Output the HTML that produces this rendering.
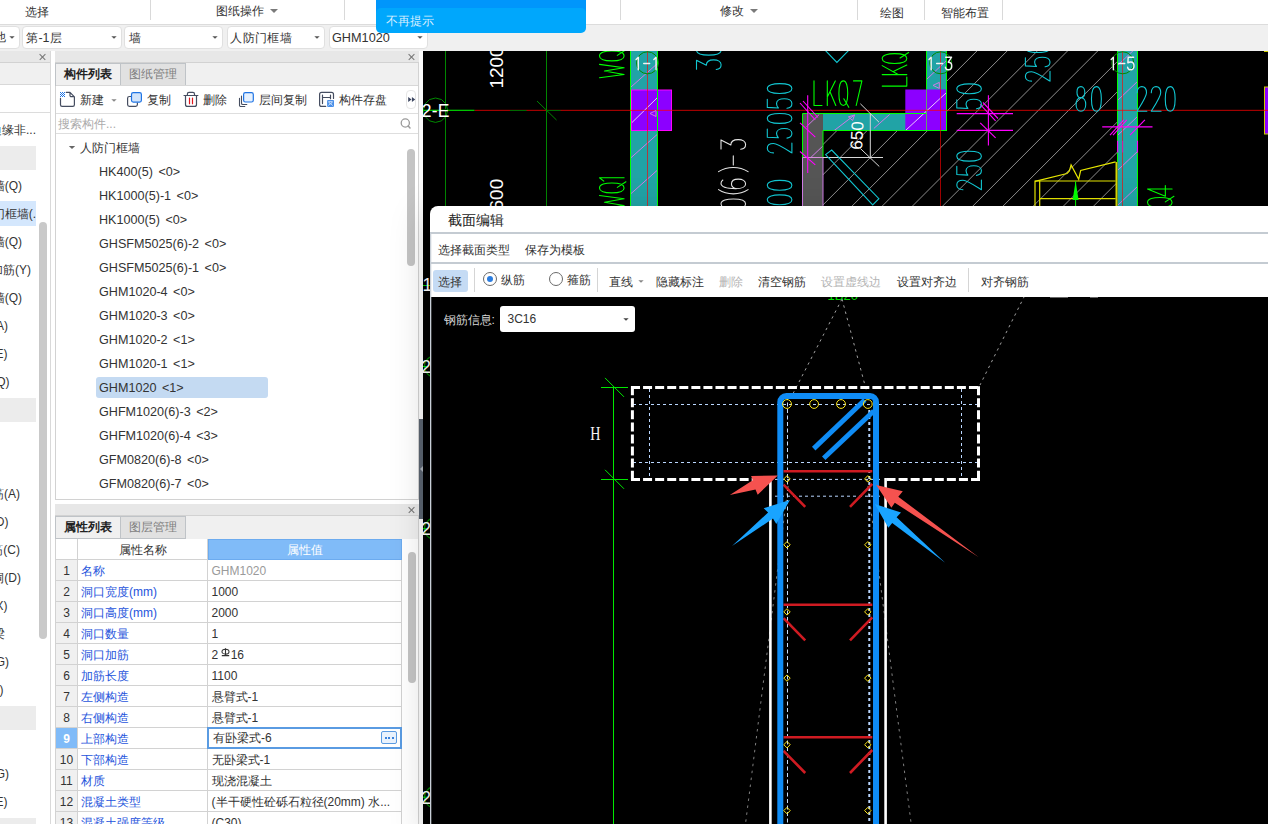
<!DOCTYPE html>
<html><head><meta charset="utf-8"><title>ui</title>
<style>
*{box-sizing:border-box;margin:0;padding:0}
html,body{width:1268px;height:824px;overflow:hidden;background:#fff}
body{position:relative;font-family:"Liberation Sans",sans-serif;font-size:12px;color:#333;line-height:1}
.abs{position:absolute}
.c{display:inline-block;width:1em;text-align:center}
.t{position:absolute;white-space:nowrap;line-height:14px;height:14px}
svg{position:absolute;left:0;top:0}
svg.ico{position:relative;left:auto;display:inline-block;vertical-align:baseline}
/* ribbon */
#ribbon{left:0;top:0;width:1268px;height:24px;background:#fff}
.rsep{position:absolute;top:0;width:1px;height:20px;background:#d9d9d9}
.rtri{position:absolute;width:0;height:0;border-left:4px solid transparent;border-right:4px solid transparent;border-top:4px solid #7a7a7a}
#tbar{left:0;top:24px;width:1268px;height:27px;background:#f0f0f0;border-top:1px solid #dcdcdc}
.dd{position:absolute;top:25.8px;height:22.8px;background:#fff;border:1px solid #e0e0e0;border-radius:4px;font-size:12.4px}
.dd .t{top:4px}
.ddtri{position:absolute;width:0;height:0;border-left:3px solid transparent;border-right:3px solid transparent;border-top:3.5px solid #555;transform:scale(0.9)}
/* panels */
.phead{position:absolute;background:#e7e7e7;border-bottom:1px solid #d2d2d2}
.tabrow{position:absolute;background:#f0f0f0}
.tab{position:absolute;height:23px;border:1px solid #bfc3c7;line-height:21px;text-align:center;font-size:12px}
.tab.on{background:#f0f0f0;font-weight:bold;color:#222}
.tab.off{background:#e1e1e1;color:#7e7e7e}
.closex{position:absolute;width:9px;height:9px}
.closex:before,.closex:after{content:"";position:absolute;left:4px;top:0.4px;width:1px;height:8.2px;background:#747474}
.closex:before{transform:rotate(45deg)}
.closex:after{transform:rotate(-45deg)}
.li{position:absolute;left:99px;height:16px;line-height:16px;font-size:12.6px;word-spacing:2px;color:#333;white-space:nowrap}
.lrow{position:absolute;left:0;height:16px;line-height:16px;font-size:12px;color:#333;white-space:nowrap;text-align:right}
.pr{position:absolute;left:55px;width:347px;height:21px}
.pr .i{position:absolute;left:0;top:0;width:23px;height:21px;background:#f0f0f0;border-right:1px solid #d2d2d2;border-bottom:1px solid #d2d2d2;text-align:center;line-height:22.5px;color:#333;border-left:1px solid #d2d2d2}
.pr .n{position:absolute;left:23px;top:0;width:130px;height:21px;border-right:1px solid #d2d2d2;border-bottom:1px solid #d2d2d2;line-height:22.5px;padding-left:3px;color:#1f55dc;white-space:nowrap;overflow:hidden}
.pr .v{position:absolute;left:153px;top:0;width:194px;height:21px;border-right:1px solid #d2d2d2;border-bottom:1px solid #d2d2d2;line-height:22.5px;padding-left:3.5px;color:#333;white-space:nowrap;overflow:hidden}
.sb{position:absolute;background:#c4c4c4;border-radius:4px}
/* dialog */
#dlg{left:430px;top:206px;width:838px;height:91px;background:#fff;border-top-left-radius:8px}
.dsep{position:absolute;left:0;width:838px;height:1.8px;background:#c4cbd2}
.vsep{position:absolute;width:1px;background:#d5d5d5}
.radio{position:absolute;width:14px;height:14px;border:1px solid #6a6a6a;border-radius:50%;background:#fff}
.radio.on:after{content:"";position:absolute;left:3px;top:3px;width:6px;height:6px;border-radius:50%;background:#2b7de0}
</style></head>
<body>
<div id="ribbon" class="abs">
<div class="rsep" style="left:150px"></div>
<div class="rsep" style="left:344px"></div>
<div class="rsep" style="left:620px"></div>
<div class="rsep" style="left:857px"></div>
<div class="rsep" style="left:924px"></div>
<div class="rsep" style="left:1002px"></div>
<div class="t" style="left:25px;top:5px;"><span class="c">选</span><span class="c">择</span></div>
<div class="t" style="left:216px;top:3.5px;"><span class="c">图</span><span class="c">纸</span><span class="c">操</span><span class="c">作</span></div>
<div class="rtri" style="left:269.5px;top:9px"></div>
<div class="t" style="left:720px;top:3.5px;"><span class="c">修</span><span class="c">改</span></div>
<div class="rtri" style="left:749.5px;top:9px"></div>
<div class="t" style="left:880px;top:5.5px;"><span class="c">绘</span><span class="c">图</span></div>
<div class="t" style="left:941px;top:5.5px;"><span class="c">智</span><span class="c">能</span><span class="c">布</span><span class="c">置</span></div>
</div>
<div id="tbar" class="abs"></div>
<div class="dd" style="left:-20px;width:39.5px">
</div>
<div class="ddtri" style="left:8.7px;top:35.5px"></div>
<div class="dd" style="left:22px;width:99.5px">
<div class="t" style="left:3px;"><span class="c">第</span>-1<span class="c">层</span></div>
</div>
<div class="ddtri" style="left:110.5px;top:35.5px"></div>
<div class="dd" style="left:124px;width:99px">
<div class="t" style="left:3.5px;"><span class="c">墙</span></div>
</div>
<div class="ddtri" style="left:212.2px;top:35.5px"></div>
<div class="dd" style="left:226.6px;width:98.6px">
<div class="t" style="left:2.4px;"><span class="c">人</span><span class="c">防</span><span class="c">门</span><span class="c">框</span><span class="c">墙</span></div>
</div>
<div class="ddtri" style="left:314px;top:35.5px"></div>
<div class="dd" style="left:328.6px;width:99px">
<div class="t" style="left:2.4px;font-size:12.7px">GHM1020</div>
</div>
<div class="ddtri" style="left:416.6px;top:35.5px"></div>
<div class="t" style="left:-6.5px;top:30px;"><span class="c">他</span></div>
<div class="abs" style="left:0;top:51px;width:51px;height:773px;background:#fff;border-right:1px solid #d9d9d9"></div>
<div class="phead" style="left:0;top:51px;width:50px;height:12px"></div>
<div class="closex" style="left:38.3px;top:53px"></div>
<div class="abs" style="left:0;top:63px;width:50px;height:22px;background:#f0f0f0;border-bottom:1px solid #d8d8d8"></div>
<div class="abs" style="left:0;top:112px;width:50px;height:1px;background:#dcdcdc"></div>
<div class="abs" style="left:0;top:145.7px;width:35.8px;height:24.6px;background:#ececec"></div>
<div class="abs" style="left:0;top:397.7px;width:35.8px;height:24.6px;background:#ececec"></div>
<div class="abs" style="left:0;top:705.7px;width:35.8px;height:24.6px;background:#ececec"></div>
<div class="abs" style="left:0;top:817.7px;width:35.8px;height:24.6px;background:#ececec"></div>
<div class="abs" style="left:0;top:201.2px;width:35.8px;height:24.7px;background:#d4e7fd"></div>
<div class="lrow" style="top:122px;width:36px;left:0"><span style="position:absolute;right:0;top:0"><span class="c">边</span><span class="c">缘</span><span class="c">非</span>...</span></div>
<div class="lrow" style="top:178px;width:22px;left:0"><span style="position:absolute;right:0;top:0"><span class="c">墙</span>(Q)</span></div>
<div class="lrow" style="top:206px;width:36px;left:0"><span style="position:absolute;right:0;top:0"><span class="c">门</span><span class="c">框</span><span class="c">墙</span>(.</span></div>
<div class="lrow" style="top:234px;width:22px;left:0"><span style="position:absolute;right:0;top:0"><span class="c">墙</span>(Q)</span></div>
<div class="lrow" style="top:262px;width:31px;left:0"><span style="position:absolute;right:0;top:0"><span class="c">加</span><span class="c">筋</span>(Y)</span></div>
<div class="lrow" style="top:290px;width:22px;left:0"><span style="position:absolute;right:0;top:0"><span class="c">墙</span>(Q)</span></div>
<div class="lrow" style="top:318px;width:8px;left:0"><span style="position:absolute;right:0;top:0">A)</span></div>
<div class="lrow" style="top:346px;width:7.5px;left:0"><span style="position:absolute;right:0;top:0">E)</span></div>
<div class="lrow" style="top:374px;width:9.5px;left:0"><span style="position:absolute;right:0;top:0">Q)</span></div>
<div class="lrow" style="top:486px;width:20px;left:0"><span style="position:absolute;right:0;top:0"><span class="c">筋</span>(A)</span></div>
<div class="lrow" style="top:514px;width:8.5px;left:0"><span style="position:absolute;right:0;top:0">D)</span></div>
<div class="lrow" style="top:542px;width:20px;left:0"><span style="position:absolute;right:0;top:0"><span class="c">筋</span>(C)</span></div>
<div class="lrow" style="top:570px;width:21px;left:0"><span style="position:absolute;right:0;top:0"><span class="c">洞</span>(D)</span></div>
<div class="lrow" style="top:598px;width:7.5px;left:0"><span style="position:absolute;right:0;top:0">X)</span></div>
<div class="lrow" style="top:626px;width:5px;left:0"><span style="position:absolute;right:0;top:0"><span class="c">梁</span></span></div>
<div class="lrow" style="top:654px;width:9px;left:0"><span style="position:absolute;right:0;top:0">G)</span></div>
<div class="lrow" style="top:682px;width:3.5px;left:0"><span style="position:absolute;right:0;top:0">)</span></div>
<div class="lrow" style="top:766px;width:9px;left:0"><span style="position:absolute;right:0;top:0">G)</span></div>
<div class="lrow" style="top:794px;width:7.5px;left:0"><span style="position:absolute;right:0;top:0">E)</span></div>
<div class="sb" style="left:39.3px;top:221.8px;width:7.3px;height:416.8px;background:#c9c9c9"></div>
<div class="abs" style="left:55px;top:51px;width:364px;height:449px;background:#fff;border:1px solid #d2d2d2;border-top:none"></div>
<div class="phead" style="left:55px;top:51px;width:364px;height:12px"></div>
<div class="closex" style="left:406.5px;top:53px"></div>
<div class="tabrow" style="left:56px;top:63px;width:362px;height:23px"></div>
<div class="tab on" style="left:55px;top:63px;width:66px"><span class="c">构</span><span class="c">件</span><span class="c">列</span><span class="c">表</span></div>
<div class="tab off" style="left:120px;top:63px;width:66px"><span class="c">图</span><span class="c">纸</span><span class="c">管</span><span class="c">理</span></div>
<div class="abs" style="left:56px;top:85px;width:362px;height:1px;background:#d8d8d8"></div>
<div class="abs" style="left:56px;top:113px;width:362px;height:1px;background:#dedede"></div>
<div class="abs" style="left:56px;top:132.5px;width:362px;height:1px;background:#dedede"></div>
<div class="t" style="left:80px;top:93px;"><span class="c">新</span><span class="c">建</span></div>
<div class="ddtri" style="left:110.7px;top:98.5px;border-top-color:#888"></div>
<div class="t" style="left:146.5px;top:93px;"><span class="c">复</span><span class="c">制</span></div>
<div class="t" style="left:203px;top:93px;"><span class="c">删</span><span class="c">除</span></div>
<div class="t" style="left:258.5px;top:93px;"><span class="c">层</span><span class="c">间</span><span class="c">复</span><span class="c">制</span></div>
<div class="t" style="left:339px;top:93px;"><span class="c">构</span><span class="c">件</span><span class="c">存</span><span class="c">盘</span></div>
<div class="abs" style="left:406.2px;top:89.5px;width:10.3px;height:19.5px;background:#fff;border:1px solid #e6e6e6;border-radius:4px"></div>
<div class="t" style="left:58px;top:116.5px;color:#ababab"><span class="c">搜</span><span class="c">索</span><span class="c">构</span><span class="c">件</span>...</div>
<div class="ddtri" style="left:69px;top:145.8px;border-top-color:#666;transform:scale(1.05)"></div>
<div class="t" style="left:79.5px;top:140.5px;"><span class="c">人</span><span class="c">防</span><span class="c">门</span><span class="c">框</span><span class="c">墙</span></div>
<div class="abs" style="left:96px;top:377px;width:172px;height:21px;background:#c4daf2;border-radius:3px"></div>
<div class="li" style="top:164px">HK400(5) &lt;0&gt;</div>
<div class="li" style="top:188px">HK1000(5)-1 &lt;0&gt;</div>
<div class="li" style="top:212px">HK1000(5) &lt;0&gt;</div>
<div class="li" style="top:236px">GHSFM5025(6)-2 &lt;0&gt;</div>
<div class="li" style="top:260px">GHSFM5025(6)-1 &lt;0&gt;</div>
<div class="li" style="top:284px">GHM1020-4 &lt;0&gt;</div>
<div class="li" style="top:308px">GHM1020-3 &lt;0&gt;</div>
<div class="li" style="top:332px">GHM1020-2 &lt;1&gt;</div>
<div class="li" style="top:356px">GHM1020-1 &lt;1&gt;</div>
<div class="li" style="top:380px">GHM1020 &lt;1&gt;</div>
<div class="li" style="top:404px">GHFM1020(6)-3 &lt;2&gt;</div>
<div class="li" style="top:428px">GHFM1020(6)-4 &lt;3&gt;</div>
<div class="li" style="top:452px">GFM0820(6)-8 &lt;0&gt;</div>
<div class="li" style="top:476px">GFM0820(6)-7 &lt;0&gt;</div>
<div class="sb" style="left:407px;top:148.5px;width:8px;height:117.5px"></div>
<div class="abs" style="left:55px;top:504px;width:364px;height:320px;background:#fff;border:1px solid #d2d2d2;border-top:none;border-bottom:none"></div>
<div class="phead" style="left:55px;top:504px;width:364px;height:12px"></div>
<div class="closex" style="left:406.5px;top:506px"></div>
<div class="tabrow" style="left:56px;top:516px;width:362px;height:23px"></div>
<div class="tab on" style="left:55px;top:516px;width:66px"><span class="c">属</span><span class="c">性</span><span class="c">列</span><span class="c">表</span></div>
<div class="tab off" style="left:120px;top:516px;width:66px"><span class="c">图</span><span class="c">层</span><span class="c">管</span><span class="c">理</span></div>
<div class="pr" style="top:539px"><div class="i" style="background:#fff"></div><div class="n" style="color:#333;text-align:center;padding:0"><span class="c">属</span><span class="c">性</span><span class="c">名</span><span class="c">称</span></div><div class="v" style="background:#80bbf8;color:#fff;text-align:center;padding:0;border-color:#6cabef;box-shadow:inset 1px 1px 0 #6cabef"><span class="c">属</span><span class="c">性</span><span class="c">值</span></div></div>
<div class="pr" style="top:560px"><div class="i" style="">1</div><div class="n"><span class="c">名</span><span class="c">称</span></div><div class="v" style="color:#9a9a9a">GHM1020</div></div>
<div class="pr" style="top:581px"><div class="i" style="">2</div><div class="n"><span class="c">洞</span><span class="c">口</span><span class="c">宽</span><span class="c">度</span>(mm)</div><div class="v" style="">1000</div></div>
<div class="pr" style="top:602px"><div class="i" style="">3</div><div class="n"><span class="c">洞</span><span class="c">口</span><span class="c">高</span><span class="c">度</span>(mm)</div><div class="v" style="">2000</div></div>
<div class="pr" style="top:623px"><div class="i" style="">4</div><div class="n"><span class="c">洞</span><span class="c">口</span><span class="c">数</span><span class="c">量</span></div><div class="v" style="">1</div></div>
<div class="pr" style="top:644px"><div class="i" style="">5</div><div class="n"><span class="c">洞</span><span class="c">口</span><span class="c">加</span><span class="c">筋</span></div><div class="v" style="">2<svg class="ico" width="9" height="9" viewBox="0 0 9 9" style="margin:0 0.5px 0 3px;top:-2.5px"><ellipse cx="4.5" cy="3.7" rx="3.5" ry="2.4" fill="none" stroke="#333" stroke-width="1.1"/><path d="M4.5,0.2 V7.4 M0.8,7.6 H8.2" stroke="#333" stroke-width="1.1" fill="none"/></svg>16</div></div>
<div class="pr" style="top:665px"><div class="i" style="">6</div><div class="n"><span class="c">加</span><span class="c">筋</span><span class="c">长</span><span class="c">度</span></div><div class="v" style="">1100</div></div>
<div class="pr" style="top:686px"><div class="i" style="">7</div><div class="n"><span class="c">左</span><span class="c">侧</span><span class="c">构</span><span class="c">造</span></div><div class="v" style=""><span class="c">悬</span><span class="c">臂</span><span class="c">式</span>-1</div></div>
<div class="pr" style="top:707px"><div class="i" style="">8</div><div class="n"><span class="c">右</span><span class="c">侧</span><span class="c">构</span><span class="c">造</span></div><div class="v" style=""><span class="c">悬</span><span class="c">臂</span><span class="c">式</span>-1</div></div>
<div class="pr" style="top:728px"><div class="i" style="background:#80bbf8;color:#fff;font-weight:bold">9</div><div class="n"><span class="c">上</span><span class="c">部</span><span class="c">构</span><span class="c">造</span></div><div class="v" style=""><span class="c">有</span><span class="c">卧</span><span class="c">梁</span><span class="c">式</span>-6</div></div>
<div class="pr" style="top:749px"><div class="i" style="">10</div><div class="n"><span class="c">下</span><span class="c">部</span><span class="c">构</span><span class="c">造</span></div><div class="v" style=""><span class="c">无</span><span class="c">卧</span><span class="c">梁</span><span class="c">式</span>-1</div></div>
<div class="pr" style="top:770px"><div class="i" style="">11</div><div class="n"><span class="c">材</span><span class="c">质</span></div><div class="v" style=""><span class="c">现</span><span class="c">浇</span><span class="c">混</span><span class="c">凝</span><span class="c">土</span></div></div>
<div class="pr" style="top:791px"><div class="i" style="">12</div><div class="n"><span class="c">混</span><span class="c">凝</span><span class="c">土</span><span class="c">类</span><span class="c">型</span></div><div class="v" style="">(<span class="c">半</span><span class="c">干</span><span class="c">硬</span><span class="c">性</span><span class="c">砼</span><span class="c">砾</span><span class="c">石</span><span class="c">粒</span><span class="c">径</span>(20mm) <span class="c">水</span>...</div></div>
<div class="pr" style="top:812px"><div class="i" style="">13</div><div class="n"><span class="c">混</span><span class="c">凝</span><span class="c">土</span><span class="c">强</span><span class="c">度</span><span class="c">等</span><span class="c">级</span></div><div class="v" style="">(C30)</div></div>
<div class="abs" style="left:207px;top:727px;width:195px;height:22px;border:2px solid #5a9be2;background:#fff"></div>
<div class="t" style="left:213px;top:731px;"><span class="c">有</span><span class="c">卧</span><span class="c">梁</span><span class="c">式</span>-6</div>
<div class="abs" style="left:381px;top:731px;width:16px;height:13px;border:1px solid #5a9be2;border-radius:2px;background:#e9f2fd"></div>
<div class="abs" style="left:384.8px;top:736.7px;width:2px;height:2px;background:#3a82dc"></div>
<div class="abs" style="left:388.3px;top:736.7px;width:2px;height:2px;background:#3a82dc"></div>
<div class="abs" style="left:391.8px;top:736.7px;width:2px;height:2px;background:#3a82dc"></div>
<div class="sb" style="left:407.5px;top:552px;width:8px;height:131px"></div>
<div class="abs" style="left:419px;top:51px;width:4px;height:773px;background:#fafafa"></div>
<div class="abs" style="left:419.3px;top:419px;width:3.7px;height:100px;background:#5b6470"></div>
<div class="abs" style="left:419.6px;top:466px;width:0;height:0;border-top:3.5px solid transparent;border-bottom:3.5px solid transparent;border-right:3px solid #aab0b8"></div>
<svg width="1268" height="824" viewBox="0 0 1268 824" style="z-index:3;pointer-events:none">
<path d="M60.5,98.3 V104.8 a1.6,1.6 0 0 0 1.6,1.6 H72.8 a1.6,1.6 0 0 0 1.6,-1.6 V96.8 L70,92.4 H66.3 M70,92.6 V95.4 a1.2,1.2 0 0 0 1.2,1.2 H74.2" fill="none" stroke="#454d60" stroke-width="1.2" stroke-linecap="round" stroke-linejoin="round"/>
<rect x="60" y="92" width="1" height="1" fill="#1f74e4"/>
<rect x="60" y="94" width="1" height="1" fill="#1f74e4"/>
<rect x="60" y="96" width="1" height="1" fill="#1f74e4"/>
<rect x="61" y="93" width="1" height="1" fill="#1f74e4"/>
<rect x="61" y="95" width="1" height="1" fill="#1f74e4"/>
<rect x="62" y="92" width="1" height="1" fill="#1f74e4"/>
<rect x="62" y="94" width="1" height="1" fill="#1f74e4"/>
<rect x="62" y="96" width="1" height="1" fill="#1f74e4"/>
<rect x="63" y="93" width="1" height="1" fill="#1f74e4"/>
<rect x="63" y="95" width="1" height="1" fill="#1f74e4"/>
<rect x="64" y="92" width="1" height="1" fill="#1f74e4"/>
<rect x="64" y="94" width="1" height="1" fill="#1f74e4"/>
<rect x="64" y="96" width="1" height="1" fill="#1f74e4"/>
<path d="M131,96.5 H129.4 a1.8,1.8 0 0 0 -1.8,1.8 V104.6 a1.8,1.8 0 0 0 1.8,1.8 H135.6 a1.8,1.8 0 0 0 1.8,-1.8 V102.5" fill="none" stroke="#454d60" stroke-width="1.2"/>
<rect x="131.5" y="92.6" width="9.9" height="9.5" rx="1.8" fill="#d2e4fa" stroke="#1f74e4" stroke-width="1.2"/>
<path d="M184,95.5 H197.9 M187.4,95.4 V94 a1.6,1.6 0 0 1 1.6,-1.6 H192.9 a1.6,1.6 0 0 1 1.6,1.6 V95.4 M185.5,95.8 V104.4 a2,2 0 0 0 2,2 H194.5 a2,2 0 0 0 2,-2 V95.8" fill="none" stroke="#454d60" stroke-width="1.2" stroke-linecap="round"/>
<path d="M189.5,98.1 V103.7 M192.5,98.1 V103.7" stroke="#e0161e" stroke-width="1.2" stroke-linecap="round"/>
<path d="M241.5,96.1 V103.2 a1.3,1.3 0 0 0 1.3,1.3 H246.8 M239.5,98.3 V105.2 a1.3,1.3 0 0 0 1.3,1.3 H244.8" fill="none" stroke="#454d60" stroke-width="1.1" stroke-linecap="round"/>
<rect x="243.6" y="92.7" width="9.7" height="9.3" rx="1.8" fill="#e6f1fe" stroke="#1f74e4" stroke-width="1.2"/>
<path d="M325.7,106.4 H321.6 a2,2 0 0 1 -2,-2 V94.4 a2,2 0 0 1 2,-2 H331.5 a2,2 0 0 1 2,2 V98.5 M322.5,95.2 V103.6 M322.5,97.5 H330.5 M330.5,95.2 V98.7" fill="none" stroke="#454d60" stroke-width="1.2" stroke-linecap="round"/>
<rect x="327.1" y="100.1" width="6.9" height="6.8" rx="0.8" fill="#4a8fe8"/><path d="M328.6,101.7 H332.4 L331,103.8 L332.6,105.6 M330,103.8 L328.4,105.6 M328.6,101.7 L330,103.8 H331" stroke="#eaf2fd" stroke-width="0.8" fill="none"/>
<circle cx="405.3" cy="123" r="4.1" fill="none" stroke="#9a9a9a" stroke-width="1.3"/><path d="M408.2,126.1 L410,128" stroke="#9a9a9a" stroke-width="1.5" stroke-linecap="round"/>
<path d="M408.2,97 L411.5,99.5 L408.2,102 Z M411.9,97 L415.2,99.5 L411.9,102 Z" fill="#3c4660"/>
</svg>
<svg width="1268" height="824" viewBox="0 0 1268 824" style="z-index:1" font-family="Liberation Sans, sans-serif">
<defs><clipPath id="cadclip"><rect x="423" y="51" width="845" height="773"/></clipPath><clipPath id="hatchclip"><path d="M823,130.5 H947 V51 H1117 V207 H823 Z"/></clipPath></defs>
<rect x="423" y="51" width="845" height="773" fill="#000"/>
<g clip-path="url(#cadclip)">
<g clip-path="url(#hatchclip)" stroke="#8e8e8e" stroke-width="1">
<line x1="757.5" y1="210" x2="927.5" y2="40"/>
<line x1="787.7" y1="210" x2="957.7" y2="40"/>
<line x1="817.9" y1="210" x2="987.9" y2="40"/>
<line x1="848.1" y1="210" x2="1018.1" y2="40"/>
<line x1="878.3" y1="210" x2="1048.3" y2="40"/>
<line x1="908.5" y1="210" x2="1078.5" y2="40"/>
<line x1="938.7" y1="210" x2="1108.7" y2="40"/>
<line x1="968.9" y1="210" x2="1138.9" y2="40"/>
<line x1="999.1" y1="210" x2="1169.1" y2="40"/>
<line x1="1029.3" y1="210" x2="1199.3" y2="40"/>
<line x1="1059.5" y1="210" x2="1229.5" y2="40"/>
<line x1="1089.7" y1="210" x2="1259.7" y2="40"/>
<line x1="1119.9" y1="210" x2="1289.9" y2="40"/>
<line x1="1150.1" y1="210" x2="1320.1" y2="40"/>
<line x1="1180.3" y1="210" x2="1350.3" y2="40"/>
</g>
<line x1="445.5" y1="51" x2="445.5" y2="210" stroke="#008600"/>
<line x1="546.5" y1="51" x2="546.5" y2="210" stroke="#008600"/>
<rect x="630.5" y="51" width="27" height="160" fill="#21a3a6"/>
<rect x="926.5" y="51" width="20" height="79.5" fill="#21a3a6"/>
<rect x="1117.5" y="51" width="20" height="160" fill="#21a3a6"/>
<rect x="802.5" y="114" width="20.5" height="96" fill="#555"/>
<rect x="823" y="114" width="83" height="16.5" fill="#21a3a6"/>
<g stroke="#cf7be6" stroke-width="1">
<line x1="631" y1="87" x2="658" y2="63"/>
<line x1="631" y1="122.8" x2="658" y2="98.8"/>
<line x1="631" y1="157.7" x2="658" y2="133.7"/>
<line x1="631" y1="193.6" x2="658" y2="169.6"/>
<line x1="631" y1="229" x2="658" y2="205"/>
<line x1="926" y1="80" x2="947" y2="60"/>
<line x1="926" y1="115" x2="947" y2="95"/>
<line x1="1118" y1="65" x2="1138" y2="46"/>
<line x1="1118" y1="100" x2="1138" y2="81"/>
<line x1="1118" y1="135" x2="1138" y2="116"/>
<line x1="1118" y1="170" x2="1138" y2="151"/>
<line x1="1118" y1="205" x2="1138" y2="186"/>
<line x1="1118" y1="240" x2="1138" y2="221"/>
<line x1="810.8" y1="157.5" x2="822.9" y2="146"/><line x1="833.8" y1="130.8" x2="854.5" y2="115"/><line x1="873.9" y1="128.4" x2="889.7" y2="114.4"/><line x1="806.5" y1="126.6" x2="819.3" y2="114.4"/>
</g>
<rect x="631.5" y="90" width="40" height="40.5" fill="#8c00ff" stroke="#ff00ff" stroke-width="1"/>
<rect x="905.3" y="89.5" width="40.9" height="40.5" fill="#8c00ff"/>
<rect x="1264.5" y="87" width="6" height="47" fill="#8c00ff" stroke="#d0d000" stroke-width="1"/>
<line x1="1264" y1="51.5" x2="1268" y2="51.5" stroke="#d0d000"/>
<g stroke="#e9c8ff" stroke-width="1"><line x1="632" y1="122.5" x2="658" y2="97"/><line x1="906" y1="130" x2="946" y2="93"/></g>
<g stroke="#00ff00" stroke-width="1" fill="none">
<line x1="630.5" y1="51" x2="630.5" y2="210"/><line x1="657.5" y1="51" x2="657.5" y2="210"/>
<line x1="926.5" y1="51" x2="926.5" y2="89.5"/><line x1="926.5" y1="89.5" x2="926.5" y2="130" stroke="#5f9f6f"/><line x1="946.5" y1="51" x2="946.5" y2="130.5"/>
<line x1="1117.5" y1="51" x2="1117.5" y2="162"/><line x1="1137.5" y1="51" x2="1137.5" y2="210"/>
<path d="M802.5,158 V113.5 H926 M823,158 V130.5 H947"/>
</g>
<path d="M802.5,158 V210 M823,158 V210" stroke="#cf7be6" fill="none"/>
<line x1="1116.5" y1="162" x2="1116.5" y2="210" stroke="#d8d800" stroke-width="2"/>
<g stroke="#ff0000" stroke-opacity="0.63" stroke-width="1">
<line x1="474.5" y1="110.5" x2="1268" y2="110.5"/><line x1="474.5" y1="109.5" x2="1268" y2="109.5" stroke-opacity="0.13"/>
<line x1="647.5" y1="51" x2="647.5" y2="210"/><line x1="940.5" y1="51" x2="940.5" y2="210"/><line x1="1122.5" y1="51" x2="1122.5" y2="210"/>
</g>
<g stroke="#008600"><line x1="423" y1="110.5" x2="474.5" y2="110.5" stroke="#00c400"/><line x1="423" y1="109.5" x2="474.5" y2="109.5" stroke="#003c00"/><line x1="510" y1="110.5" x2="526.5" y2="110.5" stroke="#006800"/><line x1="546" y1="110.5" x2="560.5" y2="110.5" stroke="#006800"/><line x1="537" y1="101" x2="556.5" y2="120"/></g>
<polygon points="435.5,98.0 441.6,99.6 446.1,104.1 447.7,110.2 446.1,116.3 441.6,120.8 435.5,122.4 429.4,120.8 424.9,116.3 423.3,110.2 424.9,104.1 429.4,99.6" fill="none" stroke="#008c00"/>
<circle cx="647.5" cy="62.8" r="11" fill="none" stroke="#008a00"/>
<circle cx="940.7" cy="62.8" r="11" fill="none" stroke="#008a00"/>
<circle cx="1122.7" cy="62.8" r="11" fill="none" stroke="#008a00"/>
<g fill="#fff">
<text x="421.7" y="117" font-size="17.5" letter-spacing="0.3">2-E</text>
<text transform="translate(503,88.6) rotate(-90)" font-size="19">1200</text>
<text transform="translate(502.7,210.5) rotate(-90)" font-size="19">600</text>
<text transform="translate(862,150) rotate(-87)" font-size="17">650</text>
</g>
<g stroke="#cf7be6" fill="none"><path d="M650,113.5 L656,110.5 L656,116.5 Z"/><path d="M933,85.4 L939.3,82.4 L939.3,88.4 Z"/><path d="M848.4,116.9 L854.5,115 L852.6,120.5 Z"/></g>
<g stroke="#d8d8d8" stroke-width="1"><line x1="870.3" y1="113.6" x2="870.3" y2="157.7"/><line x1="823" y1="157.5" x2="883" y2="157.5"/><line x1="802.5" y1="157.5" x2="823" y2="157.5" stroke="#d890dc"/><line x1="860.4" y1="103.8" x2="879" y2="122.2"/><line x1="860.4" y1="148.5" x2="879.3" y2="166.5"/></g>
<g stroke="#12c7d2" fill="none" stroke-width="1.1"><path d="M825.6,154.6 L831.7,150.1 L878.9,198.7 L872.7,204.9 Z"/><path d="M822,47 L836.9,62.4 L852,47"/></g>
<g stroke="#ff00ff" stroke-width="1.1">
<line x1="807.7" y1="95.2" x2="807.7" y2="173"/><line x1="800" y1="103" x2="815.3" y2="119.8"/><line x1="803" y1="101" x2="818" y2="117.5"/><line x1="800" y1="122.8" x2="815.3" y2="137.2"/><line x1="800" y1="151.5" x2="815.3" y2="164.9"/>
<line x1="956.7" y1="113.6" x2="1013" y2="113.6"/><line x1="956.7" y1="130.4" x2="1013" y2="130.4"/><line x1="988.4" y1="95.2" x2="988.4" y2="145.4"/>
<line x1="980.2" y1="104.4" x2="995.6" y2="120.8"/><line x1="983" y1="102.5" x2="998" y2="118.5"/><line x1="980.2" y1="122.8" x2="995.6" y2="137.8"/>
<line x1="1102.2" y1="126.9" x2="1152.5" y2="126.9"/><line x1="1110" y1="135.1" x2="1123.8" y2="119.8"/><line x1="1113" y1="135.1" x2="1126.8" y2="119.8"/><line x1="1130" y1="135.1" x2="1144.9" y2="119.8"/>
<line x1="1117.6" y1="140.7" x2="1117.6" y2="152.6"/><line x1="1137.5" y1="140.7" x2="1137.5" y2="152.6"/><line x1="1122.7" y1="140.7" x2="1122.7" y2="152.6" stroke-opacity="0.5"/>
</g>
<g stroke="#e6e600" fill="none" stroke-width="1.2"><path d="M1035,181.3 L1067,173.5 L1069.4,171 L1071.1,164.9 L1078.7,179.2 L1080.7,170.4 L1115.6,161.8"/><path d="M1035,210 V181 H1115.6 M1039.7,210 V181 M1039.7,198.7 H1115.6"/></g>
<line x1="1075.6" y1="181.3" x2="1075.6" y2="210" stroke="#00ff00"/><path d="M1075.6,181.3 L1072.6,200 L1078.6,200 Z" fill="#00ff00"/>
<g transform="translate(599.5,77.8) rotate(-90)" fill="none" stroke="#00ff00" stroke-width="1.1" stroke-linecap="round" stroke-linejoin="round"><path transform="translate(0.00,0) scale(1.12,1.23)" vector-effect="non-scaling-stroke" d="M0,0 L3,20 L6,4 L9,20 L12,0"/><path transform="translate(16.30,0) scale(1.12,1.23)" vector-effect="non-scaling-stroke" d="M5,0 C1.6,0 0.6,5 0.6,10 C0.6,15 1.6,20 5,20 C8.4,20 9.4,15 9.4,10 C9.4,5 8.4,0 5,0 Z M5.5,14.5 L10.5,21.5"/></g>
<g transform="translate(599.5,208.9) rotate(-90)" fill="none" stroke="#00ff00" stroke-width="1.1" stroke-linecap="round" stroke-linejoin="round"><path transform="translate(0.00,0) scale(1.12,1.23)" vector-effect="non-scaling-stroke" d="M0,0 L3,20 L6,4 L9,20 L12,0"/><path transform="translate(15.40,0) scale(1.12,1.23)" vector-effect="non-scaling-stroke" d="M5,0 C1.6,0 0.6,5 0.6,10 C0.6,15 1.6,20 5,20 C8.4,20 9.4,15 9.4,10 C9.4,5 8.4,0 5,0 Z M5.5,14.5 L10.5,21.5"/><path transform="translate(25.00,0) scale(1.12,1.23)" vector-effect="non-scaling-stroke" d="M2.5,3.5 L5.5,0 L5.5,20"/></g>
<g transform="translate(696.5,70.3) rotate(-90)" fill="none" stroke="#12c7d2" stroke-width="1.1" stroke-linecap="round" stroke-linejoin="round"><path transform="translate(0.00,0) scale(1.12,1.23)" vector-effect="non-scaling-stroke" d="M1,0 L9,0 L4.5,8 C7.5,8 9.3,10.5 9.3,14 C9.3,17.5 7.5,20 5,20 C2.5,20 1,18.5 0.7,16"/><path transform="translate(14.50,0) scale(1.12,1.23)" vector-effect="non-scaling-stroke" d="M5,0 C1.6,0 0.6,5 0.6,10 C0.6,15 1.6,20 5,20 C8.4,20 9.4,15 9.4,10 C9.4,5 8.4,0 5,0 Z"/></g>
<g transform="translate(721,209.5) rotate(-90)" fill="none" stroke="#e6e6e6" stroke-width="1.1" stroke-linecap="round" stroke-linejoin="round"><path transform="translate(0.00,0) scale(1.12,1.23)" vector-effect="non-scaling-stroke" d="M5,0 C1.6,0 0.6,5 0.6,10 C0.6,15 1.6,20 5,20 C8.4,20 9.4,15 9.4,10 C9.4,5 8.4,0 5,0 Z"/><path transform="translate(12.00,0) scale(1.12,1.23)" vector-effect="non-scaling-stroke" d="M7,-2 C2,5 2,15 7,22"/><path transform="translate(20.00,0) scale(1.12,1.23)" vector-effect="non-scaling-stroke" d="M8.5,1.5 C7.5,0.3 6.5,0 5.5,0 C2,0 0.7,5 0.7,12 C0.7,17 2.5,20 5,20 C7.5,20 9.3,17.5 9.3,14 C9.3,10.5 7.5,8.5 5,8.5 C2.8,8.5 1.2,10.5 0.7,13"/><path transform="translate(34.50,0) scale(1.12,1.23)" vector-effect="non-scaling-stroke" d="M3,-2 C8,5 8,15 3,22"/><path transform="translate(43.50,0) scale(1.12,1.23)" vector-effect="non-scaling-stroke" d="M1,10 L9,10"/><path transform="translate(59.50,0) scale(1.12,1.23)" vector-effect="non-scaling-stroke" d="M1,0 L9,0 L4.5,8 C7.5,8 9.3,10.5 9.3,14 C9.3,17.5 7.5,20 5,20 C2.5,20 1,18.5 0.7,16"/></g>
<g transform="translate(767.3,153.8) rotate(-90)" fill="none" stroke="#12c7d2" stroke-width="1.1" stroke-linecap="round" stroke-linejoin="round"><path transform="translate(0.00,0) scale(1.12,1.23)" vector-effect="non-scaling-stroke" d="M0.8,5 C0.8,1.5 3,0 5,0 C7.5,0 9.2,2 9.2,5 C9.2,8 7,11 0.8,20 L9.5,20"/><path transform="translate(14.90,0) scale(1.12,1.23)" vector-effect="non-scaling-stroke" d="M8.8,0 L1.5,0 L1,9 C2.5,7.8 3.8,7.5 5,7.5 C7.5,7.5 9.3,10 9.3,13.8 C9.3,17.5 7.5,20 5,20 C2.5,20 1,18.5 0.7,16"/><path transform="translate(29.80,0) scale(1.12,1.23)" vector-effect="non-scaling-stroke" d="M5,0 C1.6,0 0.6,5 0.6,10 C0.6,15 1.6,20 5,20 C8.4,20 9.4,15 9.4,10 C9.4,5 8.4,0 5,0 Z"/><path transform="translate(44.70,0) scale(1.12,1.23)" vector-effect="non-scaling-stroke" d="M8.8,0 L1.5,0 L1,9 C2.5,7.8 3.8,7.5 5,7.5 C7.5,7.5 9.3,10 9.3,13.8 C9.3,17.5 7.5,20 5,20 C2.5,20 1,18.5 0.7,16"/><path transform="translate(59.60,0) scale(1.12,1.23)" vector-effect="non-scaling-stroke" d="M5,0 C1.6,0 0.6,5 0.6,10 C0.6,15 1.6,20 5,20 C8.4,20 9.4,15 9.4,10 C9.4,5 8.4,0 5,0 Z"/></g>
<g transform="translate(767.3,205.4) rotate(-90)" fill="none" stroke="#12c7d2" stroke-width="1.1" stroke-linecap="round" stroke-linejoin="round"><path transform="translate(0.00,0) scale(1.12,1.23)" vector-effect="non-scaling-stroke" d="M5,0 C1.6,0 0.6,5 0.6,10 C0.6,15 1.6,20 5,20 C8.4,20 9.4,15 9.4,10 C9.4,5 8.4,0 5,0 Z"/><path transform="translate(14.50,0) scale(1.12,1.23)" vector-effect="non-scaling-stroke" d="M5,0 C1.6,0 0.6,5 0.6,10 C0.6,15 1.6,20 5,20 C8.4,20 9.4,15 9.4,10 C9.4,5 8.4,0 5,0 Z"/></g>
<g transform="translate(813,80.9) rotate(0)" fill="none" stroke="#00ff00" stroke-width="1.1" stroke-linecap="round" stroke-linejoin="round"><path transform="translate(0.00,0) scale(1.0,1.23)" vector-effect="non-scaling-stroke" d="M1,0 L1,20 L9,20"/><path transform="translate(13.30,0) scale(1.0,1.23)" vector-effect="non-scaling-stroke" d="M1,0 L1,20 M9,0 L1,13 M3.8,9 L9.5,20"/><path transform="translate(25.30,0) scale(1.0,1.23)" vector-effect="non-scaling-stroke" d="M5,0 C1.6,0 0.6,5 0.6,10 C0.6,15 1.6,20 5,20 C8.4,20 9.4,15 9.4,10 C9.4,5 8.4,0 5,0 Z M5.5,14.5 L10.5,21.5"/><path transform="translate(39.70,0) scale(1.0,1.23)" vector-effect="non-scaling-stroke" d="M0.8,0 L9.2,0 L3.5,20"/></g>
<g transform="translate(882.2,87.2) rotate(-90)" fill="none" stroke="#00ff00" stroke-width="1.1" stroke-linecap="round" stroke-linejoin="round"><path transform="translate(0.00,0) scale(1.12,1.23)" vector-effect="non-scaling-stroke" d="M1,0 L1,20 L9,20"/><path transform="translate(11.50,0) scale(1.12,1.23)" vector-effect="non-scaling-stroke" d="M1,0 L1,20 M9,0 L1,13 M3.8,9 L9.5,20"/><path transform="translate(23.00,0) scale(1.12,1.23)" vector-effect="non-scaling-stroke" d="M5,0 C1.6,0 0.6,5 0.6,10 C0.6,15 1.6,20 5,20 C8.4,20 9.4,15 9.4,10 C9.4,5 8.4,0 5,0 Z M5.5,14.5 L10.5,21.5"/></g>
<g transform="translate(956.8,109.6) rotate(-90)" fill="none" stroke="#12c7d2" stroke-width="1.1" stroke-linecap="round" stroke-linejoin="round"><path transform="translate(0.00,0) scale(1.12,1.23)" vector-effect="non-scaling-stroke" d="M8.8,0 L1.5,0 L1,9 C2.5,7.8 3.8,7.5 5,7.5 C7.5,7.5 9.3,10 9.3,13.8 C9.3,17.5 7.5,20 5,20 C2.5,20 1,18.5 0.7,16"/><path transform="translate(15.20,0) scale(1.12,1.23)" vector-effect="non-scaling-stroke" d="M5,0 C1.6,0 0.6,5 0.6,10 C0.6,15 1.6,20 5,20 C8.4,20 9.4,15 9.4,10 C9.4,5 8.4,0 5,0 Z"/></g>
<g transform="translate(956.8,190.6) rotate(-90)" fill="none" stroke="#12c7d2" stroke-width="1.1" stroke-linecap="round" stroke-linejoin="round"><path transform="translate(0.00,0) scale(1.12,1.23)" vector-effect="non-scaling-stroke" d="M0.8,5 C0.8,1.5 3,0 5,0 C7.5,0 9.2,2 9.2,5 C9.2,8 7,11 0.8,20 L9.5,20"/><path transform="translate(14.40,0) scale(1.12,1.23)" vector-effect="non-scaling-stroke" d="M8.8,0 L1.5,0 L1,9 C2.5,7.8 3.8,7.5 5,7.5 C7.5,7.5 9.3,10 9.3,13.8 C9.3,17.5 7.5,20 5,20 C2.5,20 1,18.5 0.7,16"/><path transform="translate(28.80,0) scale(1.12,1.23)" vector-effect="non-scaling-stroke" d="M5,0 C1.6,0 0.6,5 0.6,10 C0.6,15 1.6,20 5,20 C8.4,20 9.4,15 9.4,10 C9.4,5 8.4,0 5,0 Z"/></g>
<g transform="translate(1025.4,82) rotate(-90)" fill="none" stroke="#12c7d2" stroke-width="1.1" stroke-linecap="round" stroke-linejoin="round"><path transform="translate(0.00,0) scale(1.12,1.23)" vector-effect="non-scaling-stroke" d="M0.8,5 C0.8,1.5 3,0 5,0 C7.5,0 9.2,2 9.2,5 C9.2,8 7,11 0.8,20 L9.5,20"/><path transform="translate(14.40,0) scale(1.12,1.23)" vector-effect="non-scaling-stroke" d="M8.8,0 L1.5,0 L1,9 C2.5,7.8 3.8,7.5 5,7.5 C7.5,7.5 9.3,10 9.3,13.8 C9.3,17.5 7.5,20 5,20 C2.5,20 1,18.5 0.7,16"/><path transform="translate(28.80,0) scale(1.12,1.23)" vector-effect="non-scaling-stroke" d="M5,0 C1.6,0 0.6,5 0.6,10 C0.6,15 1.6,20 5,20 C8.4,20 9.4,15 9.4,10 C9.4,5 8.4,0 5,0 Z"/></g>
<g transform="translate(1075.3,86.6) rotate(0)" fill="none" stroke="#12c7d2" stroke-width="1.1" stroke-linecap="round" stroke-linejoin="round"><path transform="translate(0.00,0) scale(1.12,1.23)" vector-effect="non-scaling-stroke" d="M5,0 C2.8,0 1.5,2 1.5,4.5 C1.5,7 2.8,9 5,9 C7.2,9 8.5,7 8.5,4.5 C8.5,2 7.2,0 5,0 Z M5,9 C2.3,9 0.7,11.5 0.7,14.5 C0.7,17.5 2.3,20 5,20 C7.7,20 9.3,17.5 9.3,14.5 C9.3,11.5 7.7,9 5,9 Z"/><path transform="translate(15.50,0) scale(1.12,1.23)" vector-effect="non-scaling-stroke" d="M5,0 C1.6,0 0.6,5 0.6,10 C0.6,15 1.6,20 5,20 C8.4,20 9.4,15 9.4,10 C9.4,5 8.4,0 5,0 Z"/></g>
<g transform="translate(1136.2,86.6) rotate(0)" fill="none" stroke="#12c7d2" stroke-width="1.1" stroke-linecap="round" stroke-linejoin="round"><path transform="translate(0.00,0) scale(1.12,1.23)" vector-effect="non-scaling-stroke" d="M0.8,5 C0.8,1.5 3,0 5,0 C7.5,0 9.2,2 9.2,5 C9.2,8 7,11 0.8,20 L9.5,20"/><path transform="translate(14.20,0) scale(1.12,1.23)" vector-effect="non-scaling-stroke" d="M0.8,5 C0.8,1.5 3,0 5,0 C7.5,0 9.2,2 9.2,5 C9.2,8 7,11 0.8,20 L9.5,20"/><path transform="translate(28.40,0) scale(1.12,1.23)" vector-effect="non-scaling-stroke" d="M5,0 C1.6,0 0.6,5 0.6,10 C0.6,15 1.6,20 5,20 C8.4,20 9.4,15 9.4,10 C9.4,5 8.4,0 5,0 Z"/></g>
<g transform="translate(1147.5,208) rotate(-90)" fill="none" stroke="#00ff00" stroke-width="1.1" stroke-linecap="round" stroke-linejoin="round"><path transform="translate(0.00,0) scale(1.12,1.23)" vector-effect="non-scaling-stroke" d="M5,0 C1.6,0 0.6,5 0.6,10 C0.6,15 1.6,20 5,20 C8.4,20 9.4,15 9.4,10 C9.4,5 8.4,0 5,0 Z M5.5,14.5 L10.5,21.5"/><path transform="translate(11.20,0) scale(1.12,1.23)" vector-effect="non-scaling-stroke" d="M7,20 L7,0 L0.5,14.5 L10,14.5"/></g>
<g transform="translate(634.1999999999999,57.2) rotate(0)" fill="none" stroke="#f4f4f4" stroke-width="1.4" stroke-linecap="round" stroke-linejoin="round"><path transform="translate(0.00,0) scale(0.74,0.63)" vector-effect="non-scaling-stroke" d="M2.5,3.5 L5.5,0 L5.5,20"/><path transform="translate(8.80,0) scale(0.74,0.63)" vector-effect="non-scaling-stroke" d="M1,10 L9,10"/><path transform="translate(17.80,0) scale(0.74,0.63)" vector-effect="non-scaling-stroke" d="M2.5,3.5 L5.5,0 L5.5,20"/></g>
<g transform="translate(927.1,57.2) rotate(0)" fill="none" stroke="#f4f4f4" stroke-width="1.4" stroke-linecap="round" stroke-linejoin="round"><path transform="translate(0.00,0) scale(0.74,0.63)" vector-effect="non-scaling-stroke" d="M2.5,3.5 L5.5,0 L5.5,20"/><path transform="translate(8.80,0) scale(0.74,0.63)" vector-effect="non-scaling-stroke" d="M1,10 L9,10"/><path transform="translate(17.80,0) scale(0.74,0.63)" vector-effect="non-scaling-stroke" d="M1,0 L9,0 L4.5,8 C7.5,8 9.3,10.5 9.3,14 C9.3,17.5 7.5,20 5,20 C2.5,20 1,18.5 0.7,16"/></g>
<g transform="translate(1109.3000000000002,57.2) rotate(0)" fill="none" stroke="#f4f4f4" stroke-width="1.4" stroke-linecap="round" stroke-linejoin="round"><path transform="translate(0.00,0) scale(0.74,0.63)" vector-effect="non-scaling-stroke" d="M2.5,3.5 L5.5,0 L5.5,20"/><path transform="translate(8.80,0) scale(0.74,0.63)" vector-effect="non-scaling-stroke" d="M1,10 L9,10"/><path transform="translate(17.80,0) scale(0.74,0.63)" vector-effect="non-scaling-stroke" d="M8.8,0 L1.5,0 L1,9 C2.5,7.8 3.8,7.5 5,7.5 C7.5,7.5 9.3,10 9.3,13.8 C9.3,17.5 7.5,20 5,20 C2.5,20 1,18.5 0.7,16"/></g>
<circle cx="435.3" cy="366.5" r="10.8" fill="none" stroke="#008800" stroke-width="1.1"/>
<line x1="423" y1="366.5" x2="428" y2="366.5" stroke="#00e400" stroke-width="1"/>
<text x="421.3" y="372.8" font-size="17.5" fill="#fff">2</text>
<circle cx="435.3" cy="528.7" r="10.8" fill="none" stroke="#008800" stroke-width="1.1"/>
<line x1="423" y1="528.7" x2="428" y2="528.7" stroke="#00e400" stroke-width="1"/>
<text x="421.3" y="535.0" font-size="17.5" fill="#fff">2</text>
<circle cx="435.3" cy="797.2" r="10.8" fill="none" stroke="#008800" stroke-width="1.1"/>
<line x1="423" y1="797.2" x2="428" y2="797.2" stroke="#00e400" stroke-width="1"/>
<text x="421.3" y="803.5" font-size="17.5" fill="#fff">2</text>
<line x1="423" y1="285.5" x2="430" y2="285.5" stroke="#00c800" stroke-width="1"/>
<text x="422.6" y="291" font-size="17.5" fill="#fff">1</text>
</g></svg>
<div class="abs" style="left:432px;top:212px;width:840px;height:620px;z-index:2;box-shadow:-4px 4px 34px 4px rgba(0,0,0,0.15)"></div>
<div id="dlg" class="abs" style="z-index:4">
<div class="t" style="left:18px;top:5.5px;font-size:14px;line-height:16px;height:16px;color:#222"><span class="c">截</span><span class="c">面</span><span class="c">编</span><span class="c">辑</span></div>
<div class="dsep" style="top:26px"></div>
<div class="t" style="left:8px;top:36.5px;"><span class="c">选</span><span class="c">择</span><span class="c">截</span><span class="c">面</span><span class="c">类</span><span class="c">型</span></div>
<div class="t" style="left:95px;top:36.5px;"><span class="c">保</span><span class="c">存</span><span class="c">为</span><span class="c">模</span><span class="c">板</span></div>
<div class="dsep" style="top:55.9px"></div>
<div class="abs" style="left:3px;top:64px;width:35px;height:22px;background:#c5dbf4;border-radius:3px"></div>
<div class="t" style="left:8px;top:68.5px;"><span class="c">选</span><span class="c">择</span></div>
<div class="vsep" style="left:44px;top:62px;height:24px"></div>
<div class="radio on" style="left:52.7px;top:66px"></div>
<div class="t" style="left:71px;top:66.5px;"><span class="c">纵</span><span class="c">筋</span></div>
<div class="radio" style="left:118.6px;top:66px"></div>
<div class="t" style="left:137px;top:66.5px;"><span class="c">箍</span><span class="c">筋</span></div>
<div class="vsep" style="left:167px;top:62px;height:24px"></div>
<div class="t" style="left:179px;top:68.5px;"><span class="c">直</span><span class="c">线</span></div>
<div class="ddtri" style="left:208px;top:74px;border-top-color:#888"></div>
<div class="t" style="left:225.5px;top:68.5px;"><span class="c">隐</span><span class="c">藏</span><span class="c">标</span><span class="c">注</span></div>
<div class="t" style="left:288.5px;top:68.5px;color:#b4b4b4"><span class="c">删</span><span class="c">除</span></div>
<div class="t" style="left:328px;top:68.5px;"><span class="c">清</span><span class="c">空</span><span class="c">钢</span><span class="c">筋</span></div>
<div class="t" style="left:390.5px;top:68.5px;color:#b4b4b4"><span class="c">设</span><span class="c">置</span><span class="c">虚</span><span class="c">线</span><span class="c">边</span></div>
<div class="t" style="left:466.5px;top:68.5px;"><span class="c">设</span><span class="c">置</span><span class="c">对</span><span class="c">齐</span><span class="c">边</span></div>
<div class="vsep" style="left:538px;top:62px;height:24px"></div>
<div class="t" style="left:550.5px;top:68.5px;"><span class="c">对</span><span class="c">齐</span><span class="c">钢</span><span class="c">筋</span></div>
</div>
<svg width="1268" height="824" viewBox="0 0 1268 824" style="z-index:5" font-family="Liberation Serif, serif">
<defs><clipPath id="cvclip"><rect x="430" y="297" width="838" height="527"/></clipPath></defs>
<rect x="430" y="297" width="838" height="527" fill="#000"/>
<rect x="430" y="233" width="1.3" height="591" fill="#c9d0d8"/>
<g clip-path="url(#cvclip)">
<g stroke="#a0a0a0" stroke-width="1" stroke-dasharray="2.5 4" fill="none">
<line x1="842" y1="299" x2="792.8" y2="394"/><line x1="842" y1="299" x2="867.3" y2="394"/><line x1="1024.5" y1="296" x2="980" y2="385"/>
<line x1="789" y1="479" x2="745.5" y2="824" stroke="#808080" stroke-dasharray="2.5 4.5"/><line x1="867" y1="479" x2="911.2" y2="824" stroke="#808080" stroke-dasharray="2.5 4.5"/>
</g>
<text x="827.5" y="299.8" font-size="13" fill="#00e000" font-family="Liberation Sans, sans-serif">1B20</text>
<g fill="#cfcfcf"><rect x="1050" y="296" width="18" height="1.5"/><rect x="1090" y="296" width="8" height="1.5"/></g>
<g stroke="#00e800" stroke-width="1"><line x1="613.5" y1="386" x2="613.5" y2="824"/><line x1="601" y1="387.5" x2="628" y2="387.5"/><line x1="601" y1="479.5" x2="628" y2="479.5"/><line x1="605" y1="377.9" x2="624" y2="396.9"/><line x1="605" y1="469.8" x2="624" y2="488.8"/></g>
<text transform="translate(595.3,440.3) scale(0.72,1)" font-size="19.6" fill="#f4f4f4" text-anchor="middle">H</text>
<g stroke="#b9d6ff" stroke-width="1" stroke-dasharray="3 3" fill="none">
<line x1="633" y1="404.5" x2="978" y2="404.5"/><line x1="633" y1="462.5" x2="978" y2="462.5"/><line x1="649.5" y1="389" x2="649.5" y2="478"/><line x1="961.5" y1="389" x2="961.5" y2="478"/>
<line x1="775" y1="479.4" x2="881" y2="479.4"/><line x1="775" y1="496.2" x2="881" y2="496.2"/>
</g>
<g fill="none" stroke="#fff" stroke-width="3" stroke-dasharray="9 3.07"><path d="M631,387.6 H980"/><path d="M632.4,386.2 V481"/><path d="M978.5,386.2 V481"/><path d="M631,479.4 H770"/><path d="M980,479.4 H885.5"/></g>
<g stroke="#fff" stroke-width="2.6"><line x1="770.4" y1="478" x2="770.4" y2="824"/><line x1="885.6" y1="478" x2="885.6" y2="824"/></g>
<line x1="787.5" y1="396" x2="787.5" y2="824" stroke="#c4e0ff" stroke-width="1" stroke-dasharray="4 2.5"/>
<line x1="869.3" y1="410" x2="869.3" y2="824" stroke="#b9d6ff" stroke-width="2" stroke-dasharray="3 3"/>
<g stroke="#cf1b22" stroke-width="2.6" fill="none" stroke-linecap="butt">
<path d="M805.2,506.9 L783.5,484.7 M783.5,471.2 H872.3 M872.3,483.9 L850,506.9"/>
<path d="M805.2,640.4000000000001 L783.5,618.2 M783.5,604.7 H872.3 M872.3,617.4000000000001 L850,640.4000000000001"/>
<path d="M805.2,773.0 L783.5,750.8 M783.5,737.3 H872.3 M872.3,750.0 L850,773.0"/>
</g>
<path d="M780.3,824 V402 a6,6 0 0 1 6,-6 H870 a6,6 0 0 1 6,6 V824" fill="none" stroke="#0f8cf5" stroke-width="6"/>
<g stroke="#0f8cf5" stroke-width="5"><line x1="813.7" y1="448.6" x2="864.7" y2="400"/><line x1="823.7" y1="458.3" x2="873.8" y2="411"/></g>
<g stroke="#ffe81a" stroke-width="1" fill="none">
<circle cx="787" cy="404" r="4.4"/>
<circle cx="814.1" cy="404" r="4.4"/>
<circle cx="841" cy="404" r="4.4"/>
<circle cx="867.8" cy="404" r="4.4"/>
<path d="M783.8,478.9 L787,475.7 L790.2,478.9 L787,482.09999999999997 Z"/>
<path d="M864.5999999999999,478.9 L867.8,475.7 L871.0,478.9 L867.8,482.09999999999997 Z"/>
<path d="M783.8,544.8 L787,541.5999999999999 L790.2,544.8 L787,548.0 Z"/>
<path d="M864.5999999999999,544.8 L867.8,541.5999999999999 L871.0,544.8 L867.8,548.0 Z"/>
<path d="M783.8,611.9 L787,608.6999999999999 L790.2,611.9 L787,615.1 Z"/>
<path d="M864.5999999999999,611.9 L867.8,608.6999999999999 L871.0,611.9 L867.8,615.1 Z"/>
<path d="M783.8,678.1 L787,674.9 L790.2,678.1 L787,681.3000000000001 Z"/>
<path d="M864.5999999999999,678.1 L867.8,674.9 L871.0,678.1 L867.8,681.3000000000001 Z"/>
<path d="M783.8,744.7 L787,741.5 L790.2,744.7 L787,747.9000000000001 Z"/>
<path d="M864.5999999999999,744.7 L867.8,741.5 L871.0,744.7 L867.8,747.9000000000001 Z"/>
<path d="M783.8,810.6 L787,807.4 L790.2,810.6 L787,813.8000000000001 Z"/>
<path d="M864.5999999999999,810.6 L867.8,807.4 L871.0,810.6 L867.8,813.8000000000001 Z"/>
</g>
<polygon points="729.8,495 752.8,480.3 751.1,475.9 777.9,475.4 757.7,494.7 755.5,489.6" fill="#f5524f"/>
<polygon points="732,545.9 768.1,512.5 763.7,508.2 789.9,500 776.3,524 773,518.6" fill="#19a4ff"/>
<polygon points="978.8,557.2 898.3,496.7 902.8,491.2 876.2,485 891.4,507.8 894.8,502.7" fill="#f5524f"/>
<polygon points="945.2,562.7 896.6,517.2 901,512.5 874.8,504.1 888.4,527.8 892.2,522.9" fill="#19a4ff"/>
</g></svg>
<div class="t" style="left:443.5px;top:313px;color:#d6d6d6;z-index:6"><span class="c">钢</span><span class="c">筋</span><span class="c">信</span><span class="c">息</span>:</div>
<div class="abs" style="left:500px;top:306px;width:135px;height:26px;background:#fff;border-radius:3px;z-index:6"><div class="t" style="left:7.5px;top:6px;font-size:12px">3C16</div></div>
<div class="ddtri" style="left:623px;top:318px;z-index:7;border-top-color:#444"></div>
<div class="abs" style="left:376px;top:-6px;width:210px;height:20px;background:#0096fb;z-index:9"></div>
<div class="abs" style="left:376px;top:8px;width:210px;height:24.5px;background:#00a7fc;border-radius:5px;z-index:9"></div>
<div class="t" style="left:386px;top:14px;color:#d8eeff;z-index:10"><span class="c">不</span><span class="c">再</span><span class="c">提</span><span class="c">示</span></div>
</body></html>
